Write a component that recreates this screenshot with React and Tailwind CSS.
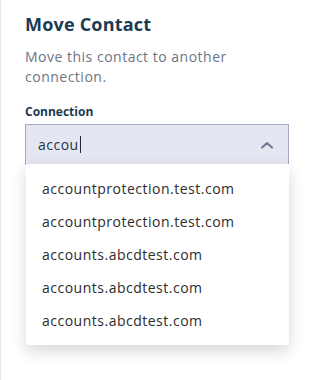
import React from "react";

export default function App() {
  const items = [
    "accountprotection.test.com",
    "accountprotection.test.com",
    "accounts.abcdtest.com",
    "accounts.abcdtest.com",
    "accounts.abcdtest.com",
  ];
  return (
    <div
      className="relative w-[311px] h-[380px] bg-white overflow-hidden border-l border-[#e3e5ea]"
      style={{ fontFamily: '"Open Sans", "Noto Sans", sans-serif' }}
    >
      <div className="pl-[24px] pr-[22px] pt-[10px]">
        <h1 className="text-[18px] leading-[28px] font-bold text-[#1c3a52] tracking-[0.2px]">
          Move Contact
        </h1>
        <p className="mt-[9px] text-[14px] leading-[20px] text-[#6b7585] tracking-[0.5px]">
          Move this contact to another connection.
        </p>
        <div className="mt-[17px] text-[12px] leading-[16px] font-bold text-[#1c3a52]">
          Connection
        </div>
        <div className="relative mt-[4px]">
          <div className="h-[41px] bg-[#e4e7f1] border border-[#a2a9c6] flex items-center pl-[12px] pr-[12px]">
            <span className="text-[14px] text-[#263445] tracking-[0.5px]">accou</span>
            <span className="w-[1px] h-[17px] bg-[#1f2937] ml-[1px]" />
            <svg
              className="ml-auto mr-[2px]"
              width="14"
              height="10"
              viewBox="0 0 14 10"
              fill="none"
            >
              <path d="M2 7.5 L7 3 L12 7.5" stroke="#6e7891" strokeWidth="2" strokeLinecap="round" strokeLinejoin="round" />
            </svg>
          </div>
          <div className="absolute left-[1px] right-0 top-[40px] bg-white rounded-b-[3px] shadow-[0_6px_16px_rgba(0,0,0,0.16)] pt-[8px] pb-[8px]">
            {items.map((t, i) => (
              <div
                key={i}
                className="h-[33px] flex items-center pl-[16px] text-[14px] text-[#2c2c2c] tracking-[0.5px]"
              >
                {t}
              </div>
            ))}
          </div>
        </div>
      </div>
    </div>
  );
}
